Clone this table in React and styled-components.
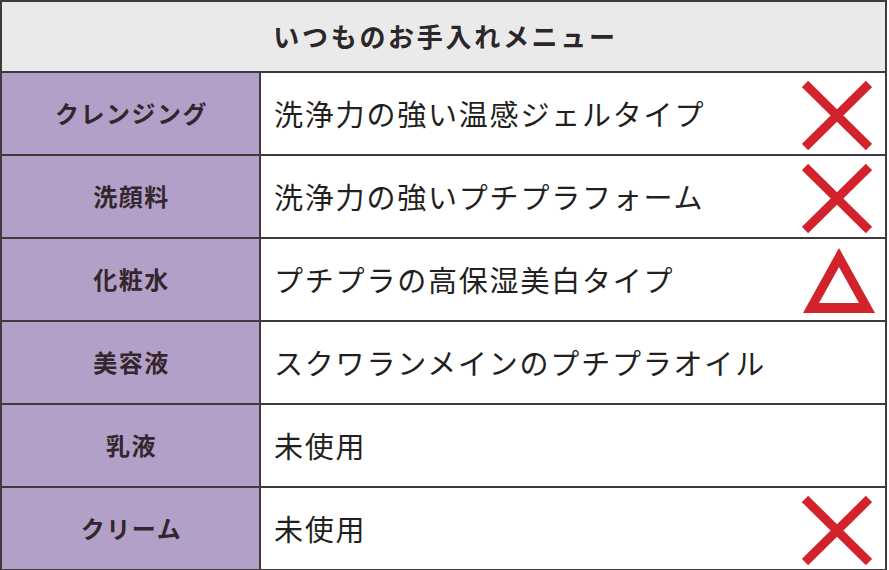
import React from "react";
import styled, { createGlobalStyle } from "styled-components";

const Global = createGlobalStyle`
  html, body { margin: 0; padding: 0; background: #ffffff; }
  body { font-family: "Noto Sans CJK JP", "Noto Sans", sans-serif; }
`;

const Table = styled.div`
  box-sizing: border-box;
  width: 887px;
  border: 2px solid #3f3b3d;
  background: #fff;
`;

const Header = styled.div`
  box-sizing: border-box;
  height: 71px;
  background: #ebeaea;
  border-bottom: 2px solid #3f3b3d;
  display: flex;
  align-items: center;
  justify-content: center;
  font-size: 26px;
  font-weight: 700;
  letter-spacing: 2.7px;
  color: #2c2628;
  padding: 0 0 3px 4px;
`;

const Row = styled.div`
  box-sizing: border-box;
  height: ${(p) => (p.$last ? 81 : 83)}px;
  display: grid;
  grid-template-columns: 259px 1fr;
  border-bottom: ${(p) => (p.$last ? "none" : "2px solid #3f3b3d")};
`;

const Label = styled.div`
  background: #b3a0c8;
  border-right: 2px solid #3f3b3d;
  display: flex;
  align-items: center;
  justify-content: center;
  font-size: 24px;
  font-weight: 700;
  letter-spacing: 1.5px;
  color: #33262d;
  padding: 0 0 2px 2px;
`;

const Content = styled.div`
  display: flex;
  align-items: center;
  justify-content: space-between;
  padding: 0 12px 2px 13px;
`;

const Text = styled.span`
  font-size: 29px;
  font-weight: 400;
  letter-spacing: 1.8px;
  color: #231f20;
`;

const MarkBox = styled.div`
  width: 72px;
  height: 70px;
  display: flex;
  align-items: center;
  justify-content: center;
  margin-top: ${(p) => p.$dy || 0}px;
  margin-right: ${(p) => p.$dx || 0}px;
`;

const Cross = () => (
  <svg width="70" height="69" viewBox="0 0 70 69">
    <g stroke="#d2232c" strokeWidth="9" strokeLinecap="butt">
      <line x1="3" y1="3" x2="67" y2="66" />
      <line x1="67" y1="3" x2="3" y2="66" />
    </g>
  </svg>
);

const Triangle = () => (
  <svg width="72" height="66" viewBox="0 0 72 66">
    <path
      fillRule="evenodd"
      fill="#d2232c"
      d="M36 0 L72 65 L0 65 Z M36 19 L56 55 L16 55 Z"
    />
  </svg>
);

const rows = [
  { label: "クレンジング", text: "洗浄力の強い温感ジェルタイプ", mark: "x" },
  { label: "洗顔料", text: "洗浄力の強いプチプラフォーム", mark: "x" },
  { label: "化粧水", text: "プチプラの高保湿美白タイプ", mark: "t" },
  { label: "美容液", text: "スクワランメインのプチプラオイル" },
  { label: "乳液", text: "未使用" },
  { label: "クリーム", text: "未使用", mark: "x" },
];

export default function App() {
  return (
    <>
      <Global />
      <Table>
        <Header>いつものお手入れメニュー</Header>
        {rows.map((r, i) => (
          <Row key={i} $last={i === rows.length - 1}>
            <Label>{r.label}</Label>
            <Content>
              <Text>{r.text}</Text>
              {r.mark === "x" && (
                <MarkBox $dy={6}>
                  <Cross />
                </MarkBox>
              )}
              {r.mark === "t" && (
                <MarkBox $dy={4} $dx={-2}>
                  <Triangle />
                </MarkBox>
              )}
            </Content>
          </Row>
        ))}
      </Table>
    </>
  );
}
